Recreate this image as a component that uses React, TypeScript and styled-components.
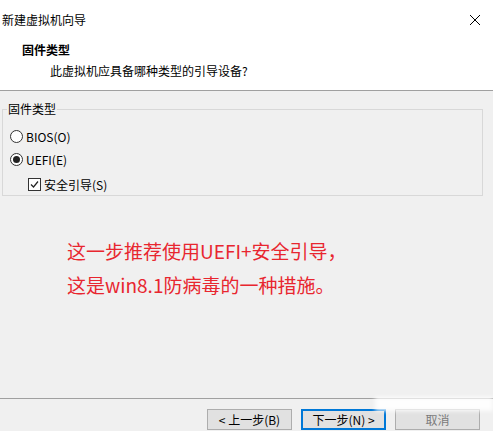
import React from "react";
import styled, { createGlobalStyle } from "styled-components";

const Global = createGlobalStyle`
  html, body { margin: 0; padding: 0; }
  body {
    width: 493px;
    height: 431px;
    overflow: hidden;
    background: #f0f0f0;
    font-family: "Microsoft YaHei", "Noto Sans CJK SC", "Noto Sans", sans-serif;
    font-size: 12px;
    color: #000;
  }
`;

const Window = styled.div`
  width: 493px;
  height: 431px;
  display: flex;
  flex-direction: column;
  background: #f0f0f0;
`;

const Header = styled.div`
  height: 90px;
  background: #fff;
  border-bottom: 1px solid #a0a0a0;
  display: flex;
  flex-direction: column;
`;

const TitleBar = styled.div`
  height: 40px;
  display: flex;
  align-items: center;
  justify-content: space-between;
  padding: 0 8px 0 2px;
`;

const TitleText = styled.span`
  font-size: 12px;
  line-height: 16px;
`;

const CloseIcon = styled.svg`
  width: 12px;
  height: 12px;
  margin-right: 4px;
`;

const HeadBlock = styled.div`
  display: flex;
  flex-direction: column;
  padding: 2px 0 0 22px;
  gap: 5px;
`;

const Heading = styled.span`
  font-weight: bold;
  font-size: 12px;
  line-height: 16px;
`;

const SubHeading = styled.span`
  padding-left: 28px;
  font-size: 12px;
  line-height: 16px;
`;

const Group = styled.fieldset`
  margin: 10px 10px 0 2px;
  padding: 0 0 0 4px;
  border: 1px solid #d8d8d8;
  display: flex;
  flex-direction: column;
`;

const Legend = styled.legend`
  padding: 0 1px;
  font-size: 12px;
  line-height: 16px;
`;

const Options = styled.div`
  display: flex;
  flex-direction: column;
  padding-top: 8px;
`;

const OptionRow = styled.div<{ $indent?: number; $gapTop?: number }>`
  height: 22px;
  display: flex;
  align-items: center;
  gap: 3px;
  padding-left: ${(p) => p.$indent ?? 3}px;
  margin-top: ${(p) => p.$gapTop ?? 0}px;
  font-size: 12px;
`;

const RadioCircle = styled.span<{ $checked?: boolean }>`
  width: 11px;
  height: 11px;
  border-radius: 50%;
  border: 1px solid #333;
  background: #fff;
  display: inline-flex;
  align-items: center;
  justify-content: center;
  &::after {
    content: "";
    display: ${(p) => (p.$checked ? "block" : "none")};
    width: 7px;
    height: 7px;
    border-radius: 50%;
    background: #222;
  }
`;

const CheckBox = styled.span`
  width: 11px;
  height: 11px;
  border: 1px solid #333;
  background: #fff;
  display: inline-flex;
  align-items: center;
  justify-content: center;
`;

const Note = styled.div`
  margin-top: 38px;
  padding-left: 67px;
  color: #e8262f;
  font-size: 19px;
  line-height: 34px;
  font-family: "Microsoft YaHei", "Noto Sans CJK SC", sans-serif;
`;

const Spacer = styled.div`
  flex: 1;
`;

const Footer = styled.div`
  height: 33px;
  border-top: 1px solid #a0a0a0;
  display: flex;
  justify-content: flex-end;
  align-items: flex-start;
  padding: 10px 13px 0 0;
  box-sizing: border-box;
  gap: 9px;
  position: relative;
`;

const Button = styled.button<{ $primary?: boolean; $dim?: boolean }>`
  width: 85px;
  height: 21px;
  box-sizing: border-box;
  padding: 0;
  background: #e1e1e1;
  border: ${(p) => (p.$primary ? "2px solid #0078d7" : "1px solid #adadad")};
  font-family: "Microsoft YaHei", "Noto Sans CJK SC", sans-serif;
  font-size: 12px;
  color: ${(p) => (p.$dim ? "#7a7a7a" : "#000")};
  display: flex;
  align-items: center;
  justify-content: center;
`;

const Watermark = styled.div`
  position: absolute;
  right: 0;
  top: -2px;
  width: 118px;
  height: 14px;
  background: rgba(255, 255, 255, 0.9);
  filter: blur(2px);
`;

export default function App() {
  return (
    <>
      <Global />
      <Window>
        <Header>
          <TitleBar>
            <TitleText>新建虚拟机向导</TitleText>
            <CloseIcon viewBox="0 0 12 12">
              <path d="M1 1 L11 11 M11 1 L1 11" stroke="#000" strokeWidth="1" />
            </CloseIcon>
          </TitleBar>
          <HeadBlock>
            <Heading>固件类型</Heading>
            <SubHeading>此虚拟机应具备哪种类型的引导设备?</SubHeading>
          </HeadBlock>
        </Header>
        <Group>
          <Legend>固件类型</Legend>
          <Options>
            <OptionRow>
              <RadioCircle />
              <span>BIOS(O)</span>
            </OptionRow>
            <OptionRow $gapTop={1}>
              <RadioCircle $checked />
              <span>UEFI(E)</span>
            </OptionRow>
            <OptionRow $indent={21} $gapTop={3}>
              <CheckBox>
                <svg width="9" height="9" viewBox="0 0 9 9">
                  <path d="M1 4.5 L3.5 7 L8 1.5" stroke="#222" strokeWidth="1.2" fill="none" />
                </svg>
              </CheckBox>
              <span>安全引导(S)</span>
            </OptionRow>
          </Options>
        </Group>
        <Note>
          这一步推荐使用UEFI+安全引导，
          <br />
          这是win8.1防病毒的一种措施。
        </Note>
        <Spacer />
        <Footer>
          <Button>&lt; 上一步(B)</Button>
          <Button $primary>下一步(N) &gt;</Button>
          <Button $dim>取消</Button>
          <Watermark />
        </Footer>
      </Window>
    </>
  );
}
